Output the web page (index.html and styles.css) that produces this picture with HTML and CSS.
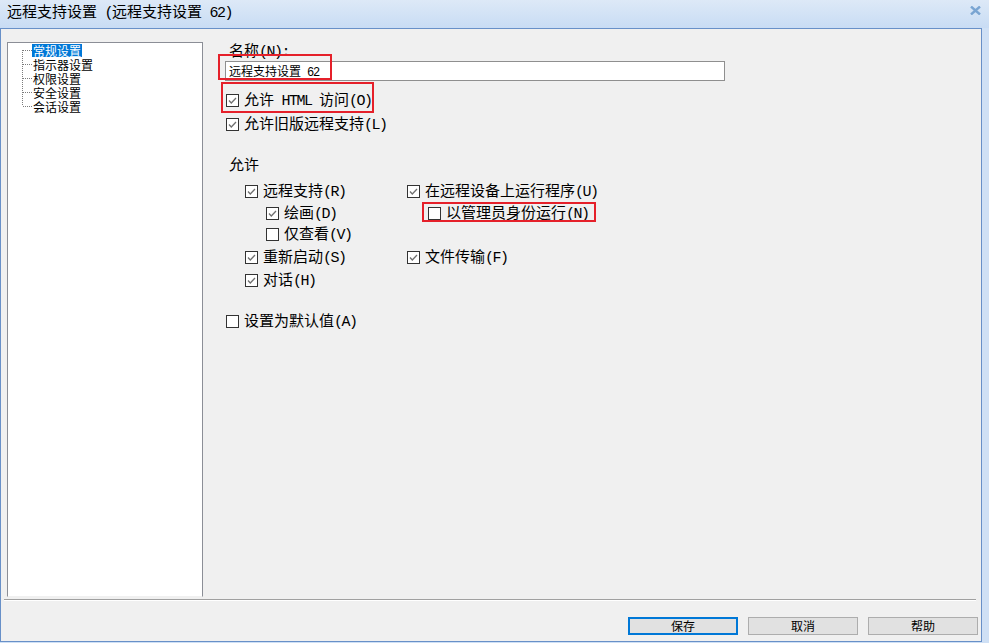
FILE: index.html
```html
<!DOCTYPE html>
<html lang="zh-CN">
<head>
<meta charset="utf-8">
<title>远程支持设置</title>
<link rel="stylesheet" href="styles.css">
</head>
<body>
<div class="frame">
  <div class="titlebar">
    <span class="title">远程支持设置<span class="m"> (</span>远程支持设置<span class="m"> 62)</span></span>
    <svg class="close" width="11" height="9" viewBox="0 0 11 9"><path d="M1 0.5 L10 8.5 M10 0.5 L1 8.5" stroke="#7aa5d2" stroke-width="2.4" fill="none"/></svg>
  </div>
  <div class="client">
    <div class="main">
      <div class="tree">
        <div class="tree-row">
          <svg class="tree-lines" width="24" height="70" viewBox="0 0 24 70">
            <g stroke="#7c7c7c" stroke-width="1" stroke-dasharray="1 1" fill="none">
              <path d="M14.5 7 V63"/>
              <path d="M15 7.5 H24 M15 21.5 H24 M15 35.5 H24 M15 49.5 H24 M15 63.5 H24"/>
            </g>
          </svg>
          <ul class="tree-list">
            <li><span class="sel">常规设置</span></li>
            <li><span>指示器设置</span></li>
            <li><span>权限设置</span></li>
            <li><span>安全设置</span></li>
            <li><span>会话设置</span></li>
          </ul>
        </div>
      </div>
      <div class="panel">
        <div class="label-row">名称<span class="m">(N):</span></div>
        <div class="input">远程支持设置<span class="m"> 62</span></div>
        <div class="row r1"><span class="cb checked"></span><span class="txt">允许<span class="m"> HTML </span>访问<span class="m">(O)</span></span></div>
        <div class="row r2"><span class="cb checked"></span><span class="txt">允许旧版远程支持<span class="m">(L)</span></span></div>
        <div class="group-title">允许</div>
        <div class="grid">
          <div class="row gl"><span class="cb checked"></span><span class="txt">远程支持<span class="m">(R)</span></span></div>
          <div class="row gr"><span class="cb checked"></span><span class="txt">在远程设备上运行程序<span class="m">(U)</span></span></div>
          <div class="row gl sub"><span class="cb checked"></span><span class="txt">绘画<span class="m">(D)</span></span></div>
          <div class="row gr sub"><span class="cb"></span><span class="txt">以管理员身份运行<span class="m">(N)</span></span></div>
          <div class="row gl sub"><span class="cb"></span><span class="txt">仅查看<span class="m">(V)</span></span></div>
          <div class="row gr"></div>
          <div class="row gl"><span class="cb checked"></span><span class="txt">重新启动<span class="m">(S)</span></span></div>
          <div class="row gr"><span class="cb checked"></span><span class="txt">文件传输<span class="m">(F)</span></span></div>
          <div class="row gl"><span class="cb checked"></span><span class="txt">对话<span class="m">(H)</span></span></div>
          <div class="row gr"></div>
        </div>
        <div class="row r3"><span class="cb"></span><span class="txt">设置为默认值<span class="m">(A)</span></span></div>
        <div class="mark mark-a"></div>
        <div class="mark mark-b"></div>
        <div class="mark mark-c"></div>
      </div>
    </div>
    <div class="separator"></div>
    <div class="buttons">
      <button class="btn primary">保存</button>
      <button class="btn">取消</button>
      <button class="btn">帮助</button>
    </div>
  </div>
</div>
</body>
</html>
```

FILE: styles.css
```css
* { box-sizing: border-box; }
html, body {
  margin: 0;
  padding: 0;
  width: 989px;
  height: 643px;
  overflow: hidden;
  background: #cfe0f5;
  font-family: "Noto Sans CJK SC", "Noto Sans", sans-serif;
  color: #000;
}
.m {
  font-family: "Liberation Mono", "DejaVu Sans Mono", monospace;
  font-size: 1em;
  letter-spacing: -0.1em;
  white-space: pre;
}
.frame {
  width: 989px;
  height: 643px;
  display: flex;
  flex-direction: column;
}
.titlebar {
  height: 28px;
  flex: none;
  background: linear-gradient(#dde9f7, #c8dcf4);
  display: flex;
  align-items: center;
  justify-content: space-between;
  padding: 0 8px 3px 7px;
}
.title {
  font-size: 15px;
  line-height: 18px;
  white-space: pre;
}
.close { margin-top: -4px; margin-right: 0; }
.client {
  width: 982px;
  height: 614px;
  flex: none;
  border: 1px solid #6890c8;
  background: #f0f0f0;
  display: flex;
  flex-direction: column;
}
.main {
  display: flex;
  padding-top: 13px;
  height: 568px;
  flex: none;
}
.tree {
  margin-left: 6px;
  width: 196px;
  height: 555px;
  flex: none;
  background: #fff;
  border: 1px solid #8b8e96;
  border-bottom-color: #f0f0f0;
}
.tree-row { display: flex; }
.tree-lines { flex: none; }
.tree-list {
  list-style: none;
  margin: 0;
  padding: 0;
  font-size: 12px;
}
.tree-list li {
  height: 14px;
  line-height: 14px;
  white-space: nowrap;
}
.tree-list li span { padding: 0 1px; display: inline-block; height: 13px; line-height: 13px; margin-top: 1px; vertical-align: top; }
.tree-list .sel { background: #0078d7; color: #fff; }

.panel {
  position: relative;
  flex: 1;
  padding-left: 22px;
  font-size: 15px;
}
.label-row {
  height: 16px;
  line-height: 16px;
  margin-left: 4px;
}
.input {
  margin-top: 3px;
  width: 500px;
  height: 20px;
  border: 1px solid #8f8f8f;
  background: #fff;
  font-size: 12px;
  line-height: 18px;
  padding-left: 3px;
}
.row {
  height: 18px;
  display: flex;
  align-items: center;
  white-space: nowrap;
}
.r1 { margin-top: 10px; margin-left: 1px; }
.r2 { margin-top: 6px; margin-left: 1px; }
.r3 { margin-top: 22px; margin-left: 1px; }
.group-title {
  margin-top: 22px;
  margin-left: 4px;
  height: 18px;
  line-height: 18px;
}
.grid {
  margin-top: 7px;
  margin-left: 20px;
  display: grid;
  grid-template-columns: 162px 200px;
  grid-template-rows: 22px 22px 20px 26px 20px;
}
.grid .row { height: auto; }
.grid .sub { padding-left: 21px; }
.cb {
  width: 13px;
  height: 13px;
  flex: none;
  border: 1px solid #333;
  background: #fff;
}
.cb.checked {
  background: #fff url("data:image/svg+xml;utf8,<svg xmlns='http://www.w3.org/2000/svg' width='11' height='11' viewBox='0 0 11 11'><path d='M2 5.5 L4.3 8 L9 3' stroke='%23707070' stroke-width='1.3' fill='none'/></svg>") no-repeat center;
}
.txt {
  margin-left: 5px;
  line-height: 18px;
}
.mark {
  position: absolute;
  border: 2px solid #e5202a;
  pointer-events: none;
}
.mark-a { left: 15px; top: 12px; width: 114px; height: 26px; }
.mark-b { left: 18px; top: 40px; width: 153px; height: 31px; }
.mark-c { left: 219px; top: 160px; width: 174px; height: 20px; }

.separator {
  margin: 2px 5px 0 3px;
  height: 2px;
  border-top: 1px solid #a0a0a0;
  border-bottom: 1px solid #fff;
}
.buttons {
  margin-top: 16px;
  display: flex;
  justify-content: flex-end;
  gap: 10px;
  padding-right: 3px;
}
.btn {
  width: 110px;
  height: 18px;
  padding: 0;
  margin: 0;
  font-family: "Noto Sans CJK SC", sans-serif;
  font-size: 12px;
  line-height: 14px;
  background: #e1e1e1;
  border: 1px solid #adadad;
  color: #000;
}
.btn.primary { border: 2px solid #0078d7; }
```
